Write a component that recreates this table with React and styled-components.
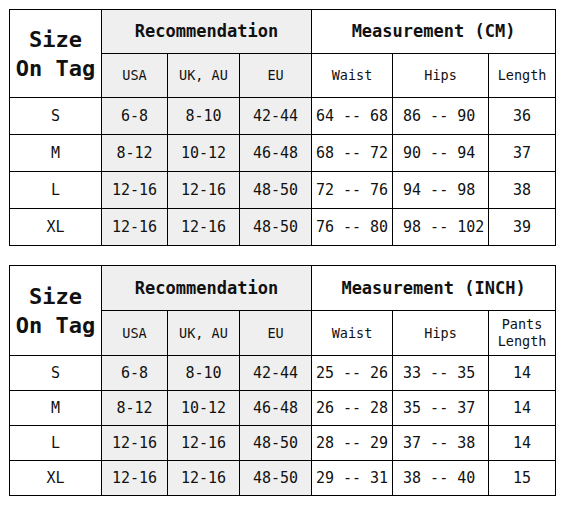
import React from "react";
import styled, { createGlobalStyle } from "styled-components";

const Global = createGlobalStyle`
  html, body { margin: 0; padding: 0; background: #fff; }
  body { padding: 9px 0 0 9px; font-family: "DejaVu Sans Mono", "Liberation Mono", monospace; color: #111; }
`;

const Stack = styled.div`
  display: flex;
  flex-direction: column;
  gap: 19px;
  width: 546px;
`;

const Table = styled.table`
  border-collapse: collapse;
  table-layout: fixed;
  width: 546px;
  border: 1px solid #000;
`;

const Th = styled.th`
  border: 1px solid #000;
  padding: 0;
  text-align: center;
  vertical-align: middle;
  background: ${(p) => (p.$shade ? "#efefef" : "#fff")};
  font-weight: ${(p) => (p.$bold ? 700 : 400)};
  font-size: ${(p) => p.$size || 13.5}px;
  line-height: ${(p) => p.$lh || "17px"};
  height: ${(p) => p.$h}px;
  box-sizing: border-box;
  color: #111;
`;

const Td = styled.td`
  border: 1px solid #000;
  padding: ${(p) => (p.$left ? "0 0 0 10px" : "0")};
  text-align: ${(p) => (p.$left ? "left" : "center")};
  vertical-align: middle;
  background: ${(p) => (p.$shade ? "#efefef" : "#fff")};
  font-size: 15px;
  height: ${(p) => p.$h}px;
  white-space: pre;
  overflow: visible;
  box-sizing: border-box;
  color: #111;
`;

const widths = [92, 66, 72, 72, 81, 96, 67];

const data1 = [
  ["S", "6-8", "8-10", "42-44", "64 -- 68", "86 -- 90", "36"],
  ["M", "8-12", "10-12", "46-48", "68 -- 72", "90 -- 94", "37"],
  ["L", "12-16", "12-16", "48-50", "72 -- 76", "94 -- 98", "38"],
  ["XL", "12-16", "12-16", "48-50", "76 -- 80", "98 -- 102", "39"],
];

const data2 = [
  ["S", "6-8", "8-10", "42-44", "25 -- 26", "33 -- 35", "14"],
  ["M", "8-12", "10-12", "46-48", "26 -- 28", "35 -- 37", "14"],
  ["L", "12-16", "12-16", "48-50", "28 -- 29", "37 -- 38", "14"],
  ["XL", "12-16", "12-16", "48-50", "29 -- 31", "38 -- 40", "15"],
];

function SizeTable({ unit, lengthLabel, rows, headH, rowH }) {
  return (
    <Table>
      <colgroup>
        {widths.map((w, i) => (
          <col key={i} style={{ width: w }} />
        ))}
      </colgroup>
      <thead>
        <tr>
          <Th rowSpan={2} $bold $size={22} $lh="29px" $h={headH}>
            Size<br />On Tag
          </Th>
          <Th colSpan={3} $bold $shade $size={17} $h={headH}>
            Recommendation
          </Th>
          <Th colSpan={3} $bold $size={17} $h={headH}>
            Measurement ({unit})
          </Th>
        </tr>
        <tr>
          <Th $shade $h={headH}>USA</Th>
          <Th $shade $h={headH}>UK, AU</Th>
          <Th $shade $h={headH}>EU</Th>
          <Th $h={headH}>Waist</Th>
          <Th $h={headH}>Hips</Th>
          <Th $h={headH}>{lengthLabel}</Th>
        </tr>
      </thead>
      <tbody>
        {rows.map((r) => (
          <tr key={r[0]}>
            <Td $h={rowH}>{r[0]}</Td>
            <Td $h={rowH} $shade>{r[1]}</Td>
            <Td $h={rowH} $shade>{r[2]}</Td>
            <Td $h={rowH} $shade>{r[3]}</Td>
            <Td $h={rowH}>{r[4]}</Td>
            <Td $h={rowH} $left>{r[5]}</Td>
            <Td $h={rowH}>{r[6]}</Td>
          </tr>
        ))}
      </tbody>
    </Table>
  );
}

export default function App() {
  return (
    <>
      <Global />
      <Stack>
        <SizeTable unit="CM" lengthLabel="Length" rows={data1} headH={44} rowH={37} />
        <SizeTable
          unit="INCH"
          lengthLabel={<>Pants<br />Length</>}
          rows={data2}
          headH={45}
          rowH={35}
        />
      </Stack>
    </>
  );
}
